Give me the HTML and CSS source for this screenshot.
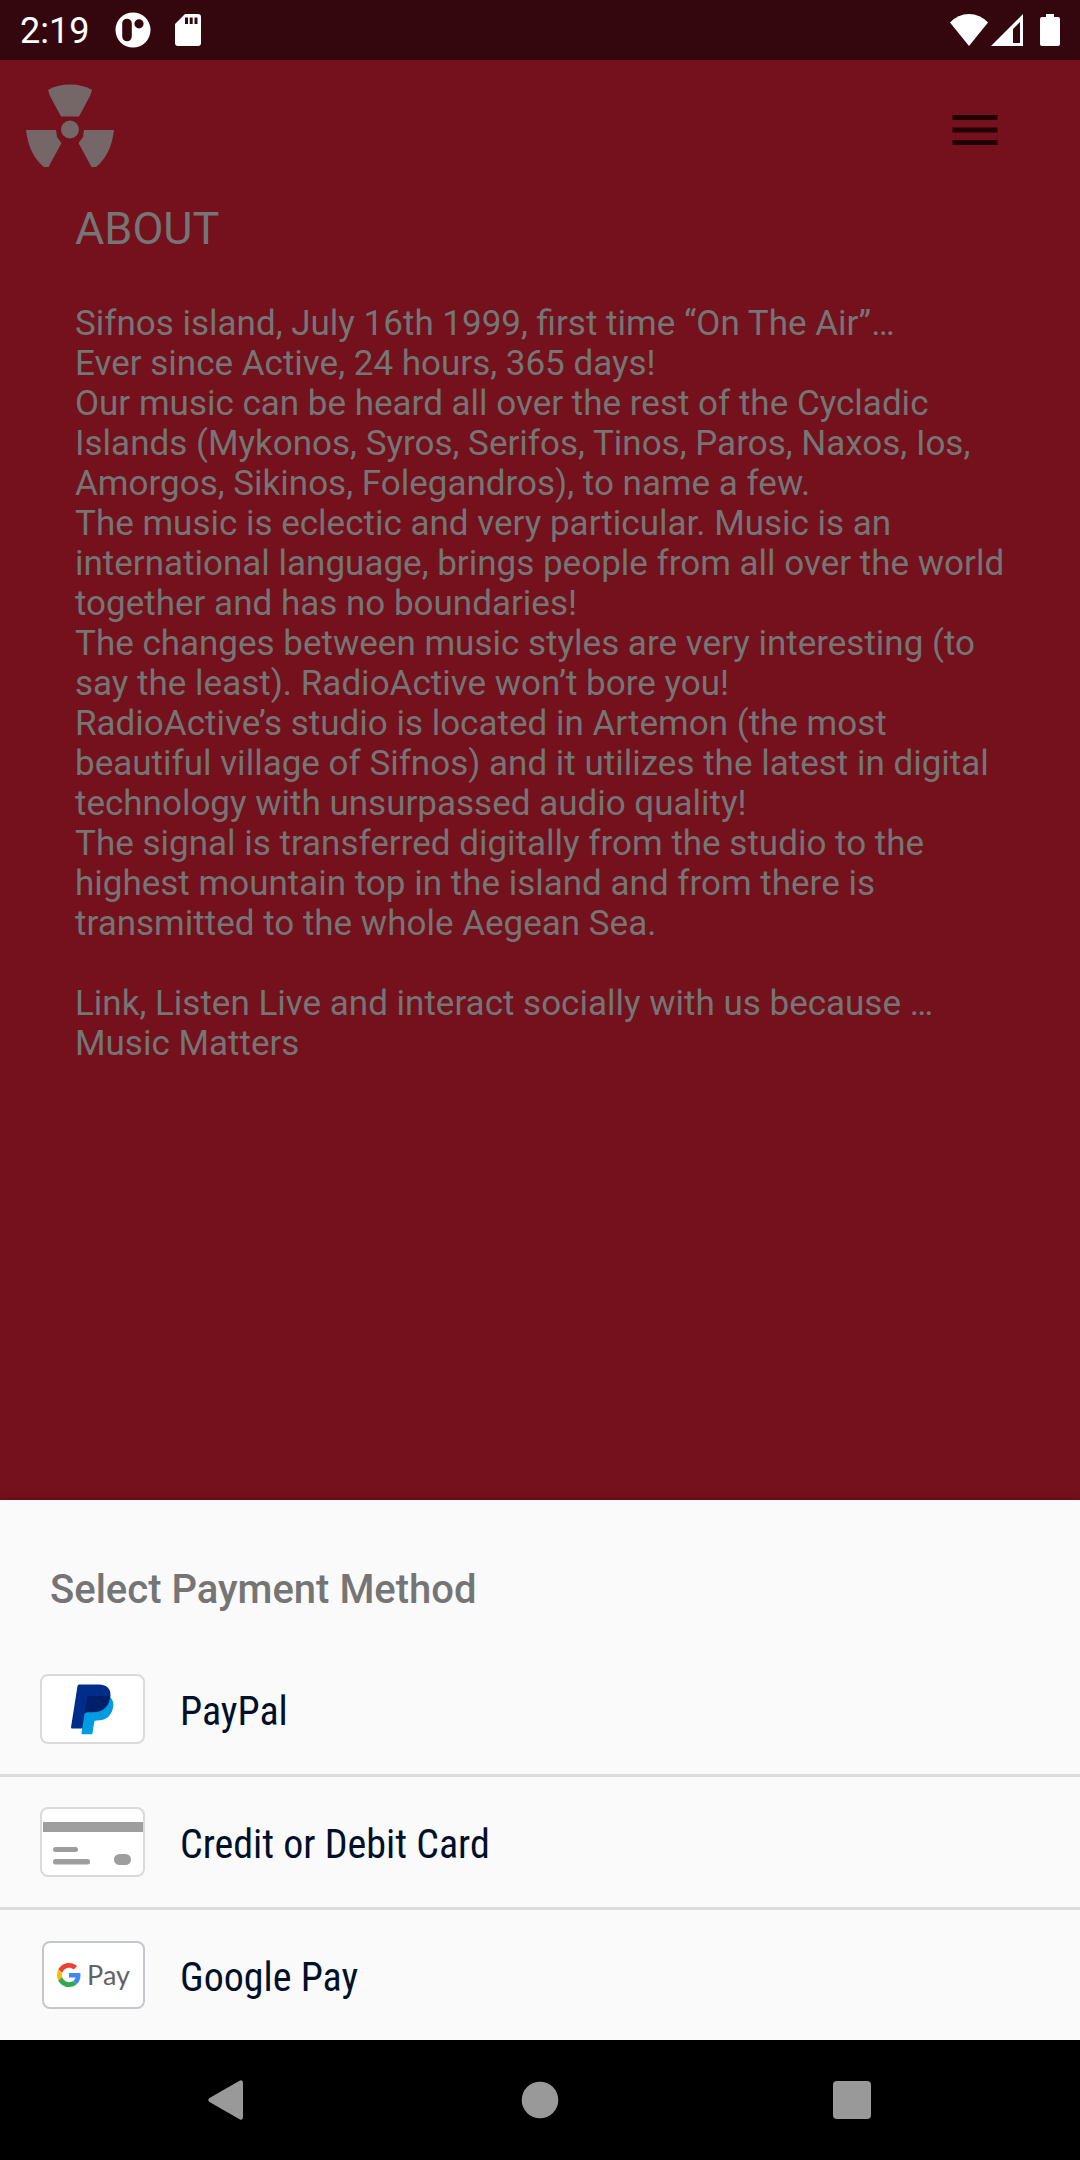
FILE: index.html
```html
<!DOCTYPE html>
<html lang="en">
<head>
<meta charset="utf-8">
<meta name="viewport" content="width=device-width, initial-scale=1">
<title>RadioActive – About</title>
<link rel="stylesheet" href="styles.css">
</head>
<body>
<div class="status">
  <div class="status-group">
    <span class="clock">2:19</span>
    <svg class="dot-icon" width="36" height="36" viewBox="0 0 36 36" aria-hidden="true">
      <path fill="#fff" fill-rule="evenodd" d="M18 0.500a17.500 17.500 0 1 0 0 35a17.500 17.500 0 1 0 0-35zM12 6.700a4.800 4.800 0 0 1 4.800 4.800v13a4.800 4.800 0 0 1-9.600 0v-13a4.800 4.800 0 0 1 4.800-4.800zM24 7.200a4.600 4.600 0 1 1 0 9.200a4.600 4.600 0 1 1 0-9.200z"/>
    </svg>
    <svg width="26" height="32" viewBox="0 0 26 32" aria-hidden="true">
      <path fill="#fff" fill-rule="evenodd" d="M10 0h13a3 3 0 0 1 3 3v26a3 3 0 0 1-3 3H3a3 3 0 0 1-3-3V10zM10 3.500v6.500h3V3.500zM14.700 3.500v6.500h3V3.500zM19.500 3.500v6.500h3V3.500z"/>
    </svg>
  </div>
  <div class="status-group status-right">
    <svg width="38" height="32" viewBox="0 0 38 32" aria-hidden="true">
      <path fill="#fff" d="M19 32L0 8.500Q8 0 19 0T38 8.500z"/>
    </svg>
    <svg width="32" height="32" viewBox="0 0 32 32" aria-hidden="true">
      <path fill="#fff" fill-rule="evenodd" d="M32 0v32H0zM29 8l-7 7v14h7z"/>
    </svg>
    <svg class="battery" width="20" height="32" viewBox="0 0 20 32" aria-hidden="true">
      <path fill="#fff" d="M6 0h8v3h4a2 2 0 0 1 2 2v25a2 2 0 0 1-2 2H2a2 2 0 0 1-2-2V5a2 2 0 0 1 2-2h4z"/>
    </svg>
  </div>
</div>

<header class="topbar">
  <svg width="88" height="85" viewBox="0 0 88 85" role="img" aria-label="RadioActive">
    <g fill="#756767">
      <circle cx="44" cy="46.500" r="9"/>
      <path d="M22 7Q31 1.500 44 1.500T66 7L64 13 53 33.500H35L24 13z"/>
      <path d="M0 47H30L31 54 35.500 60 22.500 84H18Q3 72 0 47z"/>
      <path d="M88 47H58L57 54 52.500 60 65.500 84H70Q85 72 88 47z"/>
    </g>
  </svg>
  <button class="menu" type="button" aria-label="Menu">
    <svg width="46" height="30" viewBox="0 0 46 30" aria-hidden="true">
      <path fill="#220006" d="M0.500 0h45v5h-45zM0.500 12.500h45v5h-45zM0.500 25h45v5h-45z"/>
    </svg>
  </button>
</header>

<main class="about">
  <h1>ABOUT</h1>
  <p>Sifnos island, July 16th 1999, first time “On The Air”…</p>
  <p>Ever since Active, 24 hours, 365 days!</p>
  <p>Our music can be heard all over the rest of the Cycladic Islands (Mykonos, Syros, Serifos, Tinos, Paros, Naxos, Ios, Amorgos, Sikinos, Folegandros), to name a few.</p>
  <p>The music is eclectic and very particular. Music is an international language, brings people from all over the world together and has no boundaries!</p>
  <p>The changes between music styles are very interesting (to say the least). RadioActive won’t bore you!</p>
  <p>RadioActive’s studio is located in Artemon (the most beautiful village of Sifnos) and it utilizes the latest in digital technology with unsurpassed audio quality!</p>
  <p>The signal is transferred digitally from the studio to the highest mountain top in the island and from there is transmitted to the whole Aegean Sea.</p>
  <p class="closing">Link, Listen Live and interact socially with us because …<br>Music Matters</p>
</main>

<section class="sheet" aria-labelledby="sheet-title">
  <h2 id="sheet-title">Select Payment Method</h2>
  <ul class="methods">
    <li>
      <button class="method" type="button">
        <span class="card">
          <svg width="100" height="66" viewBox="0 0 100 66" aria-hidden="true">
            <path fill="#002c8a" d="M36 8.500H56Q68 9 67.500 20L62 38 44 40 41 52.500H29q-1 0-1-1.200L34.500 10q.3-1.500 1.500-1.500z"/>
            <path fill="#009be1" d="M67 21Q71.500 25 70 32Q67 44.500 54 44.500H53q-1.500 0-1.800 1.500L49.500 57q-.2 1.200-1.200 1.200H39.500q-1.200 0-1-1.300L41.500 38q.2-1.800 2-1.800L58 33z"/>
            <path fill="#001f6b" d="M46 20H63Q66 20 67.300 21Q65 36 50 36.200H44q-2.200 0-2.500 2L44 21.500Q44.200 20 46 20z"/>
          </svg>
        </span>
        <span class="label">PayPal</span>
      </button>
    </li>
    <li>
      <button class="method" type="button">
        <span class="card">
          <svg width="100" height="66" viewBox="0 0 100 66" aria-hidden="true">
            <g fill="#9e9e9e">
              <rect y="13" width="100" height="10"/>
              <rect x="10" y="38" width="25" height="5" rx="2.500"/>
              <rect x="10" y="50" width="37" height="5.500" rx="2.500"/>
              <rect x="71" y="45" width="17" height="11" rx="5.500"/>
            </g>
          </svg>
        </span>
        <span class="label">Credit or Debit Card</span>
      </button>
    </li>
    <li>
      <button class="method" type="button">
        <span class="card card-gpay">
          <svg width="24" height="24" viewBox="0 0 48 48" aria-hidden="true">
            <path fill="#ea4335" d="M24 9.500c3.540 0 6.710 1.220 9.210 3.600l6.850-6.850C35.900 2.380 30.470 0 24 0 14.620 0 6.510 5.380 2.560 13.220l7.980 6.190C12.430 13.720 17.740 9.500 24 9.500z"/>
            <path fill="#4285f4" d="M46.980 24.550c0-1.570-.15-3.090-.38-4.550H24v9.020h12.940c-.58 2.960-2.260 5.480-4.780 7.180l7.730 6c4.510-4.180 7.090-10.360 7.090-17.650z"/>
            <path fill="#fbbc05" d="M10.530 28.590c-.48-1.450-.76-2.990-.76-4.590s.27-3.140.76-4.590l-7.980-6.190C.92 16.460 0 20.120 0 24c0 3.880.92 7.540 2.560 10.780l7.970-6.190z"/>
            <path fill="#34a853" d="M24 48c6.480 0 11.930-2.130 15.890-5.810l-7.730-6c-2.150 1.450-4.920 2.300-8.160 2.300-6.260 0-11.570-4.220-13.470-9.910l-7.980 6.190C6.510 42.620 14.620 48 24 48z"/>
          </svg>
          <span class="gpay-word">Pay</span>
        </span>
        <span class="label">Google Pay</span>
      </button>
    </li>
  </ul>
</section>

<nav class="navbar" aria-label="System">
  <button type="button" aria-label="Back">
    <svg width="40" height="40" viewBox="0 0 40 40" aria-hidden="true"><path fill="#999" d="M32 0.500Q35 -0.500 35 3V37Q35 40.500 32 39.500L1.500 22Q-1 20 1.500 18z"/></svg>
  </button>
  <button type="button" aria-label="Home">
    <svg width="40" height="40" viewBox="0 0 40 40" aria-hidden="true"><circle cx="20" cy="20" r="18.300" fill="#999"/></svg>
  </button>
  <button type="button" aria-label="Recent apps">
    <svg width="40" height="40" viewBox="0 0 40 40" aria-hidden="true"><rect x="1" y="1" width="38" height="38" rx="4" fill="#999"/></svg>
  </button>
</nav>
</body>
</html>
```
FILE: styles.css
```css
* {
  box-sizing: border-box;
  margin: 0;
  padding: 0;
}

body {
  display: flex;
  flex-direction: column;
  min-height: 100vh;
  background: #74111c;
  color: #757575;
  font-family: Roboto, "Liberation Sans", sans-serif;
}

svg {
  display: block;
  flex: none;
}

button {
  border: 0;
  background: none;
  color: inherit;
  font: inherit;
  cursor: pointer;
}

.status {
  display: flex;
  justify-content: space-between;
  align-items: center;
  height: 60px;
  padding: 0 20px;
  background: #34070e;
  color: #fff;
}

.status-group {
  display: flex;
  align-items: center;
}

.clock {
  padding-top: 2px;
  font-size: 36px;
  line-height: 40px;
}

.dot-icon {
  margin: 0 24px 0 26px;
}

.status-right {
  gap: 3px;
}

.battery {
  margin-left: 14px;
}

.topbar {
  display: flex;
  justify-content: space-between;
  align-items: flex-start;
  padding: 23px 82px 32px 26px;
}

.menu {
  padding-top: 32px;
}

.about {
  flex: 1;
  padding: 2px 64px 40px 75px;
  font-size: 35px;
  line-height: 40px;
}

.about h1 {
  margin-bottom: 48px;
  font-size: 45px;
  font-weight: 400;
  line-height: 54px;
}

.about .closing {
  margin-top: 40px;
}

.sheet {
  background: #fafafa;
  box-shadow: 0 0 6px rgba(0, 0, 0, 0.3);
}

.sheet h2 {
  padding: 66px 50px 30px;
  font-size: 40px;
  font-weight: 500;
  line-height: 48px;
}

.methods {
  list-style: none;
}

.methods li + li {
  border-top: 3px solid #dcdcdc;
}

.method {
  display: flex;
  align-items: center;
  gap: 35px;
  width: 100%;
  height: 130px;
  padding: 0 40px;
  color: #001028;
  text-align: left;
}

.card {
  display: flex;
  flex: none;
  align-items: center;
  justify-content: center;
  width: 105px;
  height: 70px;
  border: 2px solid #dadada;
  border-radius: 8px;
  background: #fff;
}

.card-gpay {
  gap: 6px;
  width: 103px;
  height: 68px;
  margin-left: 2px;
  border-color: #c4c7cc;
  color: #5f6368;
}

.gpay-word {
  font-family: Lato, sans-serif;
  font-size: 27px;
  line-height: 28px;
}

.label {
  padding-top: 6px;
  font-family: "Roboto Condensed", "Liberation Sans Narrow", Roboto, sans-serif;
  font-size: 40px;
  line-height: 48px;
}

.navbar {
  display: grid;
  grid-template-columns: repeat(3, 1fr);
  height: 120px;
  padding: 0 72px;
  background: #000;
}

.navbar button {
  display: flex;
  align-items: center;
  justify-content: center;
}
```
